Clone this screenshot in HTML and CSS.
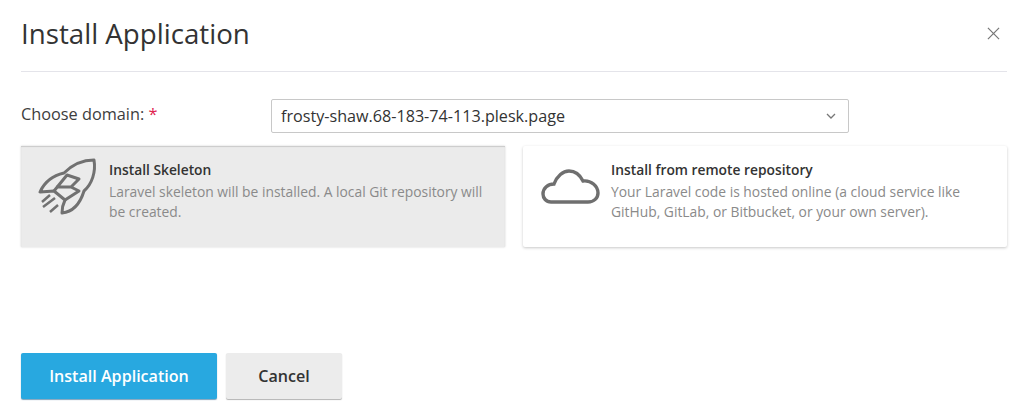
FILE: index.html
```html
<!DOCTYPE html>
<html lang="en">
<head>
<meta charset="utf-8">
<title>Install Application</title>
<link rel="stylesheet" href="styles.css">
</head>
<body>
<div class="dialog">
  <header class="head">
    <h1 class="title">Install Application</h1>
    <svg class="close" viewBox="0 0 14 14"><path d="M1 1l12 12M13 1L1 13"/></svg>
  </header>
  <div class="field">
    <label class="label">Choose domain: <span class="req">*</span></label>
    <div class="select">
      <span>frosty-shaw.68-183-74-113.plesk.page</span>
      <svg class="chev" viewBox="0 0 10 6"><path d="M1 1l4 4 4-4"/></svg>
    </div>
  </div>
  <div class="cards">
    <div class="card active">
      <svg class="icon rocket" viewBox="0 0 66 66">
        <path d="M60 6C48 6 38 11 30 19C21 21 11 27 6 38L20 37L31 46C29 50 28 54 28 59C38 58 46 50 50 37C58 30 62 18 60 6Z"/>
        <path d="M20 37L33 21L45 25L37 33L45 37L31 46M22 33H37"/>
        <path class="thin" d="M8 48L16 41M9 53L21 44M16 58L24 51"/>
      </svg>
      <div class="text">
        <div class="card-title">Install Skeleton</div>
        <div class="card-desc">Laravel skeleton will be installed. A local Git repository will be created.</div>
      </div>
    </div>
    <div class="card">
      <svg class="icon cloud" viewBox="0 0 66 50">
        <path d="M15 42C10 42 7 38 7 34C7 28 12 24 18 24C21 16 27 11 33 11C39 11 44 15 47 21C55 20 62 26 62 33C62 38 58 42 52 42Z"/>
      </svg>
      <div class="text">
        <div class="card-title">Install from remote repository</div>
        <div class="card-desc">Your Laravel code is hosted online (a cloud service like GitHub, GitLab, or Bitbucket, or your own server).</div>
      </div>
    </div>
  </div>
  <div class="actions">
    <button class="btn primary">Install Application</button>
    <button class="btn">Cancel</button>
  </div>
</div>
</body>
</html>
```
FILE: styles.css
```css
* { box-sizing: border-box; }
html, body { margin: 0; background: #fff; }
body { width: 1024px; height: 410px; overflow: hidden; font-family: "Open Sans", sans-serif; color: #333; }
.dialog { display: flex; flex-direction: column; height: 410px; padding: 0 17px 11px 21px; }
.head { display: flex; align-items: center; justify-content: space-between; height: 72px; border-bottom: 1px solid #e4e4ea; padding-bottom: 6px; }
.title { margin: 0; font-size: 27.7px; font-weight: 400; color: #333; line-height: 36px; }
.close { width: 13px; height: 13px; margin-right: 7px; margin-top: 2px; fill: none; stroke: #777; stroke-width: 1.3; }
.field { display: flex; align-items: center; margin-top: 27px; }
.label { width: 250px; font-size: 16.3px; color: #3d3d3d; padding-bottom: 4px; }
.req { color: #e0234e; }
.select { width: 578px; height: 34px; display: flex; align-items: center; justify-content: space-between; padding: 0 12px 0 9px; border: 1px solid #c8c8c8; border-radius: 2px; font-size: 16.15px; color: #333; }
.chev { width: 10px; height: 6px; fill: none; stroke: #777; stroke-width: 1.3; }
.cards { display: flex; gap: 18px; margin-top: 13px; }
.card { width: 484px; height: 101px; display: flex; padding: 8px 16px 0 13px; background: #fff; box-shadow: 0 1px 3px rgba(0,0,0,.22); border-radius: 2px; }
.card.active { background: #ebebeb; box-shadow: inset 0 1px 1px rgba(0,0,0,.14), 0 0 2px rgba(0,0,0,.18); border-radius: 0; }
.icon { flex: none; }
.rocket { width: 66px; height: 66px; margin-right: 9px; fill: none; stroke: #717171; stroke-width: 3; stroke-linejoin: round; }
.thin { stroke-width: 2.5; }
.cloud { width: 66px; height: 50px; margin-top: 6px; margin-right: 9px; fill: none; stroke: #6f6f6f; stroke-width: 3.4; }
.text { flex: 1; padding-top: 6.5px; }
.card-title { font-size: 13.8px; font-weight: 600; color: #333; line-height: 18px; }
.card-desc { font-size: 13.85px; color: #8a8a8a; line-height: 19.5px; margin-top: 3.5px; }
.actions { display: flex; gap: 9px; margin-top: auto; }
.btn { height: 46px; width: 116px; border: 0; border-radius: 2px; background: #ececec; box-shadow: 0 1px 1px rgba(0,0,0,.3); font: 600 16.1px "Open Sans", sans-serif; color: #333; padding: 0; }
.btn.primary { width: 196px; background: #28a8e0; color: #fff; box-shadow: 0 1px 1px rgba(0,70,120,.5); }
```
